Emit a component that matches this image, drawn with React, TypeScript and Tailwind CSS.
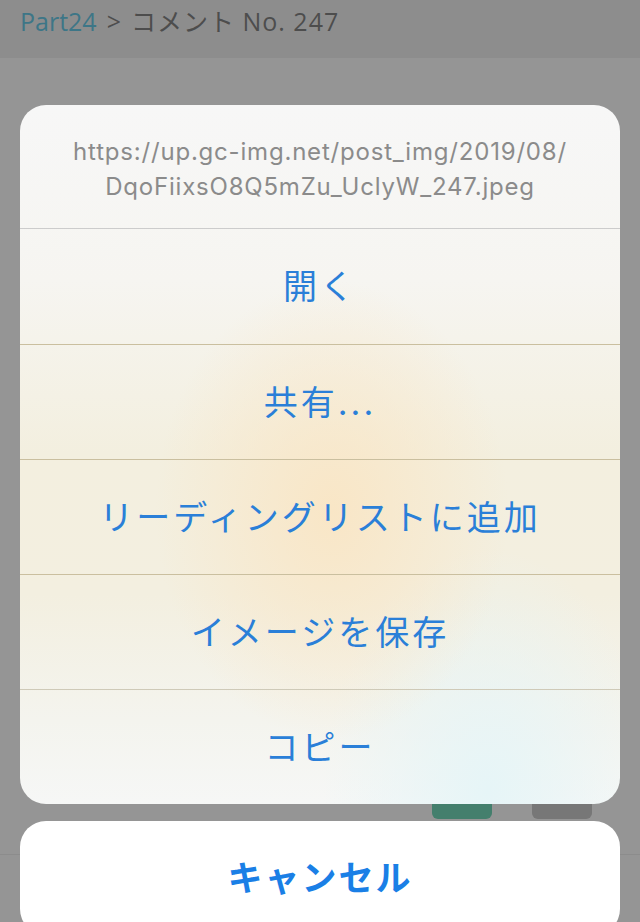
import React from 'react';

const actions = ['開く', '共有...', 'リーディングリストに追加', 'イメージを保存', 'コピー'];

export default function App() {
  return (
    <div className="relative w-[640px] h-[922px] overflow-hidden bg-[#959595] font-['Inter','Noto_Sans_CJK_JP',sans-serif]">
      {/* dimmed page underneath */}
      <div className="h-[58px] bg-[#8d8d8d] px-5 pt-[3px] text-[25px] leading-[36px] font-['Open_Sans','Noto_Sans_CJK_JP',sans-serif] text-[#4d4d4d]">
        <span className="text-[#3d7687]">Part24</span>
        <span className="mx-[10px]">&gt;</span>
        <span className="tracking-[1px]">コメント No. 247</span>
      </div>
      <div className="h-[725px]" />
      <div className="flex justify-end gap-10 pr-12">
        <div className="w-[60px] h-[36px] rounded-md bg-[#447f6d]" />
        <div className="w-[60px] h-[36px] rounded-md bg-[#777777]" />
      </div>
      <div className="mt-[35px] border-t border-[#8c8c8c]" />

      {/* action sheet */}
      <div className="absolute left-5 right-5 top-[105px]">
        <div className="rounded-[26px] overflow-hidden bg-[radial-gradient(ellipse_at_52%_58%,#f9e6c6_0%,transparent_40%),radial-gradient(ellipse_at_78%_98%,#e6f5f7_0%,transparent_25%),linear-gradient(to_bottom,#f7f7f7_0%,#f6f5f1_25%,#f3efdf_50%,#f3efe0_70%,#f4f4ee_88%,#f6f7f6_100%)]">
          <div className="h-[123px] pt-[29px] text-center text-[24px] leading-[35px] tracking-[0.8px] text-[#8b8b8b]">
            <div>https://up.gc-img.net/post_img/2019/08/</div>
            <div>DqoFiixsO8Q5mZu_UclyW_247.jpeg</div>
          </div>
          {actions.map((a, i) => (
            <div
              key={a}
              className={`flex items-center justify-center border-t text-[34px] tracking-[3px] text-[#2a7fd8] ${
                i === 0 ? 'border-[#cccccc] h-[116px]' : 'border-[#cabf9f] h-[115px]'
              } ${i === 4 ? 'h-[112px] border-[#cfcab8]' : ''}`}
            >
              {a}
            </div>
          ))}
        </div>
        <div className="mt-[17px] h-[114px] rounded-[26px] bg-white flex items-center justify-center text-[35px] font-bold tracking-[2px] text-[#1a7fe6]">
          キャンセル
        </div>
      </div>
    </div>
  );
}
